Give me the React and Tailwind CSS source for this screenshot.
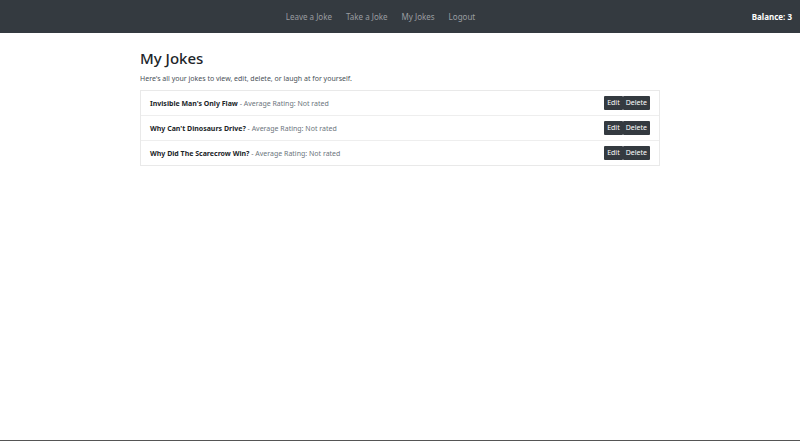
const jokes = [
  { title: "Invisible Man's Only Flaw", rating: "Not rated" },
  { title: "Why Can't Dinosaurs Drive?", rating: "Not rated" },
  { title: "Why Did The Scarecrow Win?", rating: "Not rated" },
];

const links = ["Leave a Joke", "Take a Joke", "My Jokes", "Logout"];

function NavBar() {
  return (
    <header className="grid h-[33px] grid-cols-[1fr_auto_1fr] items-center bg-[#343a40] px-2 text-[8px]">
      <span />
      <nav className="flex gap-[14px] pr-[39px]">
        {links.map((link) => (
          <a key={link} href="#" className="text-[#9a9da0]">
            {link}
          </a>
        ))}
      </nav>
      <span className="text-right font-bold text-white">Balance: 3</span>
    </header>
  );
}

function JokeRow({ joke }) {
  return (
    <li className="flex h-[25px] items-center justify-between border-b border-[#eeeeee] px-[9px] last:h-6 last:border-b-0">
      <p className="pt-[2px] text-[#6c757d]">
        <strong className="font-bold text-[#212529]">{joke.title}</strong> - Average Rating: {joke.rating}
      </p>
      <div className="flex text-white">
        <button className="h-[14px] rounded-[1px] bg-[#343a40] px-[3px]">Edit</button>
        <button className="h-[14px] rounded-[1px] bg-[#343a40] px-[3px]">Delete</button>
      </div>
    </li>
  );
}

export default function App() {
  return (
    <div className="flex min-h-screen flex-col border-b border-[#555555] bg-white font-['Noto_Sans',sans-serif] text-[7px] text-[#212529]">
      <NavBar />
      <main className="mx-auto w-[65%] pt-4">
        <h1 className="text-[15px] leading-[18px] font-medium">My Jokes</h1>
        <p className="mt-[6px] mb-[5px] leading-3 text-[#495057]">Here's all your jokes to view, edit, delete, or laugh at for yourself.</p>
        <ul className="border border-[#e9e9e9]">
          {jokes.map((joke) => (
            <JokeRow key={joke.title} joke={joke} />
          ))}
        </ul>
      </main>
    </div>
  );
}
